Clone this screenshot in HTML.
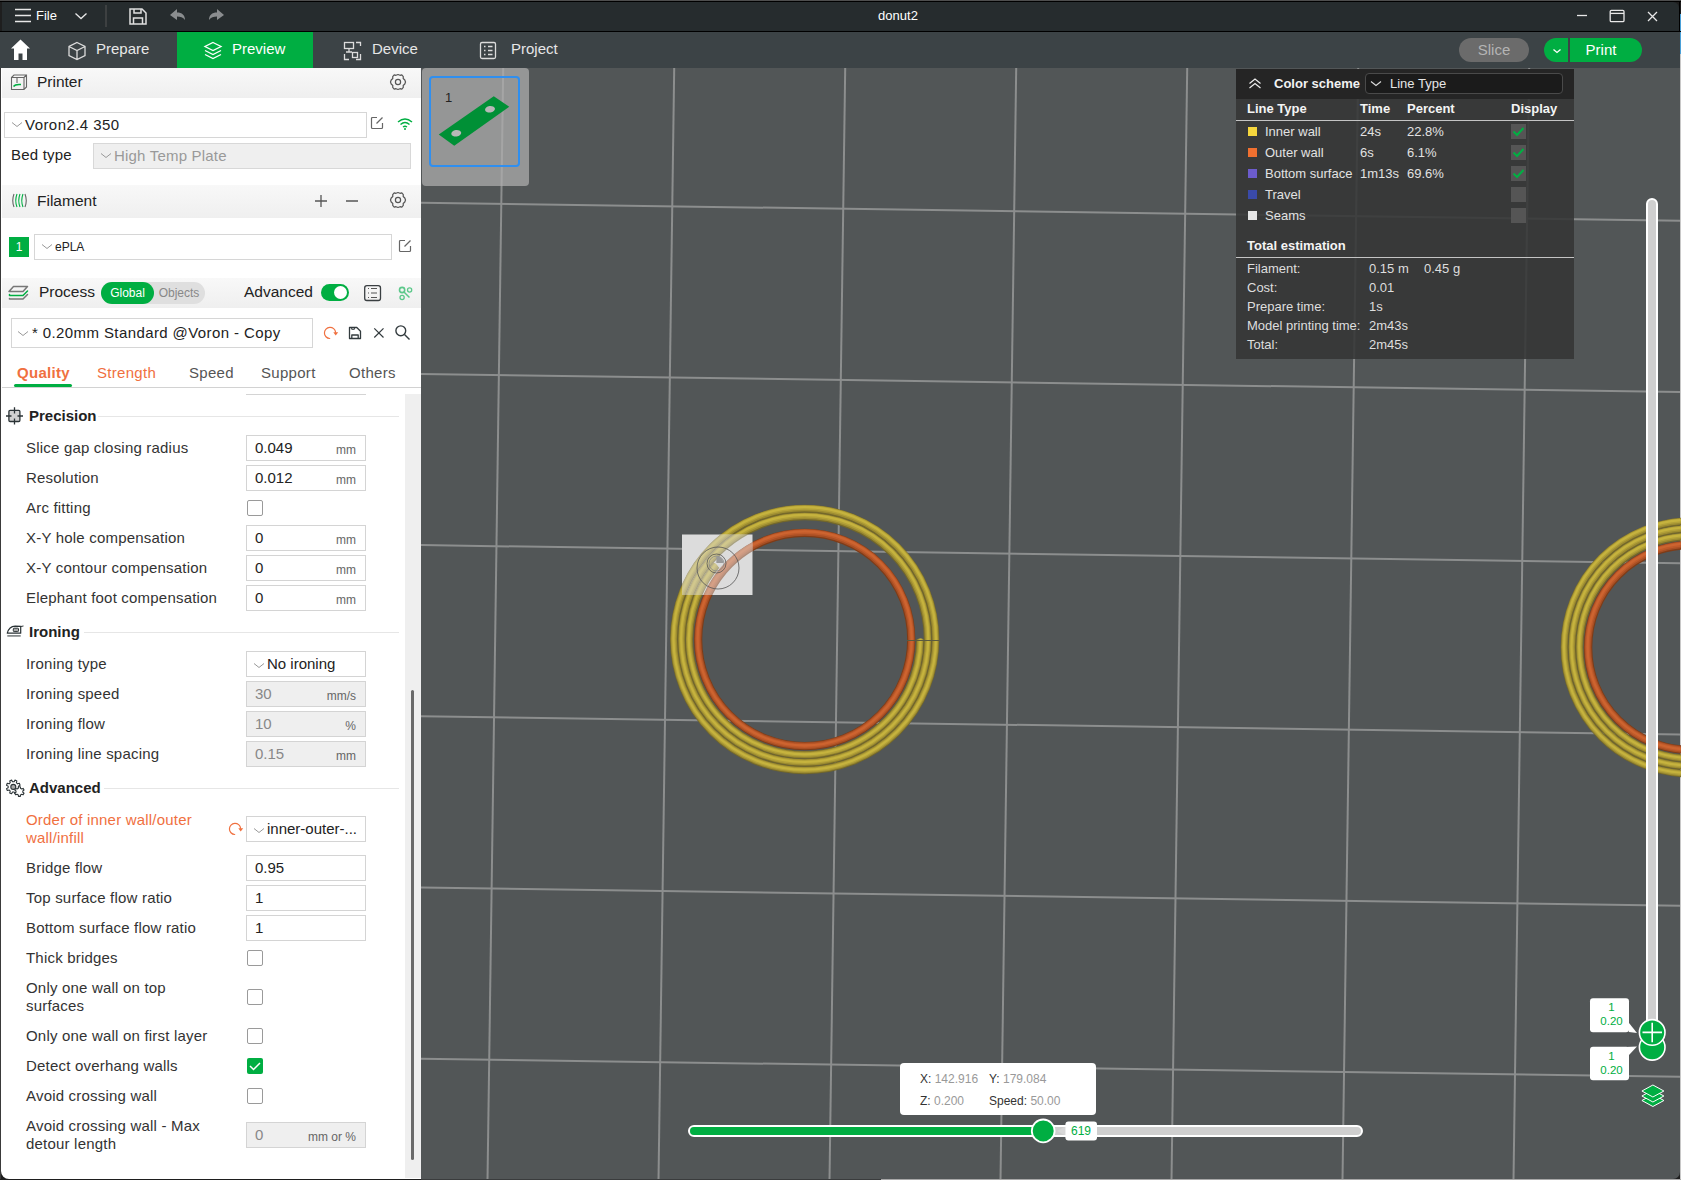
<!DOCTYPE html>
<html><head><meta charset="utf-8">
<style>
*{box-sizing:border-box;margin:0;padding:0}
html,body{width:1681px;height:1180px;overflow:hidden;background:#1e1e1e;font-family:"Liberation Sans",sans-serif;}
.a{position:absolute}
.tt{color:#e6e6e6;font-size:15px;line-height:16px;white-space:nowrap}
.hdr{left:2px;width:419px;background:linear-gradient(#f8f8f8,#efefef)}
.ht{color:#222;font-size:15.5px;line-height:16px;white-space:nowrap}
.box{border:1px solid #d6d6d6;background:#fff}
.lbl{left:26px;color:#333;font-size:15px;line-height:18px;white-space:nowrap;letter-spacing:0.2px}
.inp{left:246px;width:120px;height:26px;border:1px solid #d4d4d4;background:#fff}
.inp.dis{background:#efefef}
.val{position:absolute;left:8px;top:4px;font-size:15px;line-height:16px;color:#222}
.dis .val{color:#888}
.unit{position:absolute;right:9px;top:8px;font-size:12px;line-height:12px;color:#666}
.cb{left:247px;width:16px;height:16px;border:1px solid #9a9a9a;border-radius:2px;background:#fff}
.sec{left:29px;color:#222;font-size:15px;font-weight:bold;line-height:16px;white-space:nowrap}
.secl{height:1px;background:#e6e6e6}
</style></head><body>
<div class="a" style="left:0;top:0;width:1681px;height:1px;background:#4e4e4e"></div>
<div class="a" style="left:0;top:1px;width:1681px;height:1px;background:#000"></div>
<div class="a" style="left:2px;top:2px;width:1677px;height:29px;background:#262c2e;border-radius:0 6px 0 0"></div>
<div class="a" style="left:1679px;top:2px;width:1px;height:30px;background:#000"></div>
<div class="a" style="left:1680px;top:14px;width:1px;height:40px;background:#4aa0d8"></div>
<div class="a" style="left:1680px;top:54px;width:1px;height:1126px;background:#c8c8c8"></div>
<div class="a" style="left:0;top:31px;width:1681px;height:1px;background:#000"></div>
<svg class="a" style="left:0;top:0" width="240" height="31">
  <g stroke="#e8e8e8" stroke-width="1.6" fill="none">
   <path d="M15 9.5H31M15 15.5H31M15 21.5H31"/>
   <path d="M75.5 13.5L81 18.5L86.5 13.5" stroke-width="1.3"/>
  </g>
  <rect x="105.5" y="5" width="1" height="22" fill="#555"/>
  <g stroke="#e0e0e0" stroke-width="1.5" fill="none">
   <path d="M130 9H142L146 13V24H130Z"/>
   <path d="M134 9V13H141V9M133.5 24V18H142.5V24"/>
  </g>
  <path d="M170 15L177 9V12.5C182 12.5 185 15 185 20C183 17 180.5 16.5 177 16.5V20Z" fill="#8a8d8f"/>
  <path d="M224 15L217 9V12.5C212 12.5 209 15 209 20C211 17 213.5 16.5 217 16.5V20Z" fill="#8a8d8f"/>
 </svg>
<div class="a" style="left:36px;top:9px;color:#fff;font-size:13px;line-height:14px">File</div>
<div class="a" style="left:0;top:9px;width:1796px;text-align:center;color:#fff;font-size:13px;line-height:14px">donut2</div>
<svg class="a" style="left:1560px;top:0" width="121" height="31">
  <g stroke="#e8e8e8" stroke-width="1.3" fill="none">
   <path d="M17 15.5H27"/>
   <rect x="50.2" y="10.3" width="13.8" height="11.4" rx="1.2"/>
   <path d="M50.2 13.4H64"/>
   <path d="M88 12L97 21M97 12L88 21"/>
  </g>
 </svg>
<div class="a" style="left:0;top:32px;width:1680px;height:36px;background:#3c4346"></div>
<div class="a" style="left:177px;top:32px;width:136px;height:36px;background:#00ae42"></div>
<svg class="a" style="left:0;top:32px" width="600" height="36">
  <path d="M20.5 7.5L11 16.5H14V28H18.5V21.5H22.5V28H27V16.5H30Z" fill="#fff"/>
  <g stroke="#dcdcdc" stroke-width="1.3" fill="none">
   <path d="M77 10.5L85 14.5V23.5L77 27.5L69 23.5V14.5Z M69 14.5L77 18.5L85 14.5M77 18.5V27.5"/>
  </g>
  <g stroke="#fff" stroke-width="1.3" fill="none">
   <path d="M213 10.5L221 14.5L213 18.5L205 14.5Z"/>
   <path d="M205 18.5L213 22.5L221 18.5"/>
   <path d="M205 22.5L213 26.5L221 22.5"/>
  </g>
  <g stroke="#dcdcdc" stroke-width="1.3" fill="none">
   <rect x="344.5" y="10.5" width="9" height="6"/>
   <path d="M349 16.5V20M346 20H352"/>
   <path d="M356 10.5H360.5V14M344.5 22V27.5H349M356 27.5H360.5V22"/>
   <rect x="352.5" y="20.5" width="5" height="5"/>
   <rect x="480.5" y="10.5" width="15" height="16" rx="1.5"/>
   <path d="M484 14.5H485.5M488 14.5H492.5M484 18.5H485.5M488 18.5H492.5M484 22.5H485.5M488 22.5H492.5"/>
  </g>
 </svg>
<div class="a tt" style="left:96px;top:41px;color:#e8e8e8">Prepare</div>
<div class="a tt" style="left:232px;top:41px;color:#fff">Preview</div>
<div class="a tt" style="left:372px;top:41px;color:#e6e6e6">Device</div>
<div class="a tt" style="left:511px;top:41px;color:#e6e6e6">Project</div>
<div class="a" style="left:1459px;top:38px;width:70px;height:24px;border-radius:12px;background:#6b6b6b;color:#b4b4b4;font-size:15px;line-height:24px;text-align:center">Slice</div>
<div class="a" style="left:1544px;top:38px;width:98px;height:24px;border-radius:12px;background:#00ae42"></div>
<div class="a" style="left:1568px;top:38px;width:2px;height:24px;background:#3c4346"></div>
<svg class="a" style="left:1550px;top:46px" width="14" height="10"><path d="M3.5 3.5L7 6.5L10.5 3.5" stroke="#fff" stroke-width="1.3" fill="none"/></svg>
<div class="a" style="left:1565px;top:38px;width:72px;height:24px;color:#fff;font-size:15px;line-height:24px;text-align:center">Print</div>
<div class="a" style="left:0;top:68px;width:1px;height:1112px;background:#3a3a3a"></div>
<div class="a" style="left:1px;top:68px;width:420px;height:1111px;background:#fff;border-radius:0 0 0 8px"></div>
<div class="a" style="left:0;top:1179px;width:421px;height:1px;background:#1e1e1e"></div>
<div class="a hdr" style="top:68px;height:30px"></div>
<svg class="a" style="left:10px;top:74px" width="18" height="17" viewBox="0 0 18 17"><path d="M1.5 3.5L4 1H16.5V13L14 15.5H1.5Z M1.5 3.5H14V15.5 M14 3.5L16.5 1" fill="none" stroke="#666" stroke-width="1.1"/><path d="M7 4V9" stroke="#666" stroke-width="1.1"/><path d="M3.5 12.5Q5 10 11 10.5" stroke="#00ae42" stroke-width="1.5" fill="none"/></svg>
<div class="a ht" style="left:37px;top:74px">Printer</div>
<svg class="a" style="left:389px;top:73px" width="18" height="18" viewBox="0 0 18 18"><path d="M9 1.5L11 2.3L12.8 1.9L14.3 3.7L14.2 5.5L15.8 7L16.5 9L15.8 11L14.2 12.5L14.3 14.3L12.8 16.1L11 15.7L9 16.5L7 15.7L5.2 16.1L3.7 14.3L3.8 12.5L2.2 11L1.5 9L2.2 7L3.8 5.5L3.7 3.7L5.2 1.9L7 2.3Z" fill="none" stroke="#555" stroke-width="1.2" stroke-linejoin="round"/><circle cx="9" cy="9" r="2.6" fill="none" stroke="#555" stroke-width="1.2"/></svg>
<div class="a box" style="left:4px;top:112px;width:363px;height:26px"></div>
<svg class="a" style="left:11px;top:121px" width="12" height="8" viewBox="0 0 12 8"><path d="M1 1.5L6 5.5L11 1.5" fill="none" stroke="#999" stroke-width="1"/></svg>
<div class="a" style="left:25px;top:117px;font-size:15px;line-height:16px;color:#222;letter-spacing:0.45px">Voron2.4 350</div>
<svg class="a" style="left:369px;top:115px" width="16" height="16" viewBox="0 0 16 16"><path d="M8 2.5H3.5Q2.5 2.5 2.5 3.5V12.5Q2.5 13.5 3.5 13.5H12.5Q13.5 13.5 13.5 12.5V8" fill="none" stroke="#666" stroke-width="1.2"/><path d="M7.5 8.5L13.5 2.5" stroke="#666" stroke-width="1.2"/></svg>
<svg class="a" style="left:396px;top:116px" width="18" height="16" viewBox="0 0 18 16"><path d="M2 6Q9 0 16 6M4.5 8.5Q9 4.5 13.5 8.5M7 11Q9 9.5 11 11" fill="none" stroke="#00ae42" stroke-width="1.4"/><circle cx="9" cy="13" r="1" fill="#00ae42"/></svg>
<div class="a" style="left:11px;top:147px;font-size:15px;line-height:16px;color:#222;letter-spacing:0.2px">Bed type</div>
<div class="a" style="left:93px;top:143px;width:318px;height:26px;border:1px solid #d8d8d8;background:#efefef"></div>
<svg class="a" style="left:100px;top:152px" width="12" height="8" viewBox="0 0 12 8"><path d="M1 1.5L6 5.5L11 1.5" fill="none" stroke="#999" stroke-width="1"/></svg>
<div class="a" style="left:114px;top:148px;font-size:15px;line-height:16px;color:#999;letter-spacing:0.2px">High Temp Plate</div>
<div class="a hdr" style="top:185px;height:33px"></div>
<svg class="a" style="left:11px;top:193px" width="17" height="15" viewBox="0 0 17 15"><path d="M3 1Q0.5 7.5 3 14M14 1Q16.5 7.5 14 14" fill="none" stroke="#666" stroke-width="1.1"/><path d="M6 1Q3.5 7.5 6 14M9 1Q6.5 7.5 9 14M12 1Q9.5 7.5 12 14" fill="none" stroke="#00ae42" stroke-width="1.1"/></svg>
<div class="a ht" style="left:37px;top:193px">Filament</div>
<svg class="a" style="left:313px;top:194px" width="50" height="14"><path d="M2 7H14M8 1V13M33 7H45" stroke="#555" stroke-width="1.3"/></svg>
<svg class="a" style="left:389px;top:191px" width="18" height="18" viewBox="0 0 18 18"><path d="M9 1.5L11 2.3L12.8 1.9L14.3 3.7L14.2 5.5L15.8 7L16.5 9L15.8 11L14.2 12.5L14.3 14.3L12.8 16.1L11 15.7L9 16.5L7 15.7L5.2 16.1L3.7 14.3L3.8 12.5L2.2 11L1.5 9L2.2 7L3.8 5.5L3.7 3.7L5.2 1.9L7 2.3Z" fill="none" stroke="#555" stroke-width="1.2" stroke-linejoin="round"/><circle cx="9" cy="9" r="2.6" fill="none" stroke="#555" stroke-width="1.2"/></svg>
<div class="a" style="left:9px;top:237px;width:20px;height:20px;background:#00ae42;color:#fff;font-size:12px;line-height:20px;text-align:center">1</div>
<div class="a box" style="left:34px;top:234px;width:358px;height:26px"></div>
<svg class="a" style="left:41px;top:243px" width="12" height="8" viewBox="0 0 12 8"><path d="M1 1.5L6 5.5L11 1.5" fill="none" stroke="#999" stroke-width="1"/></svg>
<div class="a" style="left:55px;top:240px;font-size:12px;line-height:14px;color:#222">ePLA</div>
<svg class="a" style="left:397px;top:238px" width="16" height="16" viewBox="0 0 16 16"><path d="M8 2.5H3.5Q2.5 2.5 2.5 3.5V12.5Q2.5 13.5 3.5 13.5H12.5Q13.5 13.5 13.5 12.5V8" fill="none" stroke="#666" stroke-width="1.2"/><path d="M7.5 8.5L13.5 2.5" stroke="#666" stroke-width="1.2"/></svg>
<div class="a hdr" style="top:278px;height:30px"></div>
<svg class="a" style="left:0;top:278px" width="40" height="30"><g fill="none" stroke-width="1.5" stroke-linejoin="round" stroke-linecap="round"><path d="M13.5 8.5H27.5L23 13.5H9Z" stroke="#777"/><path d="M9.5 16.5V17.5H23L27.5 13" stroke="#00ae42"/><path d="M9.5 20.5V21H23L27.5 16.5" stroke="#777"/></g></svg>
<div class="a ht" style="left:39px;top:284px">Process</div>
<div class="a" style="left:101px;top:282px;width:104px;height:22px;border-radius:11px;background:#dfdfdf"></div>
<div class="a" style="left:101px;top:282px;width:53px;height:22px;border-radius:11px;background:#00ae42;color:#fff;font-size:12px;line-height:22px;text-align:center">Global</div>
<div class="a" style="left:155px;top:282px;width:48px;height:22px;color:#888;font-size:12px;line-height:22px;text-align:center">Objects</div>
<div class="a ht" style="left:244px;top:284px">Advanced</div>
<div class="a" style="left:321px;top:284px;width:28px;height:17px;border-radius:9px;background:#00ae42"></div>
<div class="a" style="left:334px;top:286px;width:13px;height:13px;border-radius:7px;background:#fff"></div>
<svg class="a" style="left:356px;top:278px" width="65" height="30"><rect x="8.7" y="7.7" width="15.8" height="14.8" rx="2.2" fill="none" stroke="#3a3f42" stroke-width="1.3"/><path d="M12 10.5H13M15 10.5H21M12 15H13M15 15H21M12 19.5H13M15 19.5H21" stroke="#555" stroke-width="1.2"/><g fill="none" stroke="#5cc88a"><circle cx="46.1" cy="12" r="2.6" stroke-width="1.6"/><circle cx="53.6" cy="12" r="2.1" stroke-width="1.3"/><circle cx="46.1" cy="19.5" r="2.1" stroke-width="1.3"/><path d="M48 14L53.5 19.5" stroke-width="1.5"/></g></svg>
<div class="a box" style="left:11px;top:318px;width:302px;height:30px"></div>
<svg class="a" style="left:17px;top:330px" width="12" height="8" viewBox="0 0 12 8"><path d="M1 1.5L6 5.5L11 1.5" fill="none" stroke="#999" stroke-width="1"/></svg>
<div class="a" style="left:32px;top:325px;font-size:15px;line-height:16px;color:#222;letter-spacing:0.4px">* 0.20mm Standard @Voron - Copy</div>
<svg class="a" style="left:316px;top:318px" width="100" height="30"><path d="M13.7 20.5A5.6 5.6 0 1 1 19.6 14.3" fill="none" stroke="#f0703f" stroke-width="1.2" stroke-linecap="round"/><path d="M17.3 14.3H22.2L19.7 17.6Z" fill="#f0703f"/><g fill="none" stroke="#333b3e" stroke-width="1.3" stroke-linejoin="round"><path d="M33.5 9.5H40.8L44.5 13.2V20.5H33.5Z"/><path d="M35.8 20.5V17H42.2V20.5"/><path d="M35.7 9.5V11.3H38.4V9.5" stroke-width="1"/><path d="M58.3 10.3L67.5 19.5M67.5 10.3L58.3 19.5" stroke-width="1.2"/><circle cx="84.8" cy="12.8" r="4.9" stroke-width="1.4"/><path d="M88.5 16.5L93.5 21.5" stroke-width="1.4"/></g></svg>
<div class="a" style="left:17px;top:365px;font-size:15px;line-height:16px;color:#f0703f;font-weight:bold;letter-spacing:0.3px">Quality</div>
<div class="a" style="left:97px;top:365px;font-size:15px;line-height:16px;color:#f0703f;font-weight:normal;letter-spacing:0.3px">Strength</div>
<div class="a" style="left:189px;top:365px;font-size:15px;line-height:16px;color:#555;font-weight:normal;letter-spacing:0.3px">Speed</div>
<div class="a" style="left:261px;top:365px;font-size:15px;line-height:16px;color:#555;font-weight:normal;letter-spacing:0.3px">Support</div>
<div class="a" style="left:349px;top:365px;font-size:15px;line-height:16px;color:#555;font-weight:normal;letter-spacing:0.3px">Others</div>
<div class="a" style="left:14px;top:384px;width:58px;height:3px;border-radius:2px;background:#00ae42"></div>
<div class="a" style="left:2px;top:387px;width:419px;height:1px;background:#d2d2d2"></div>
<div class="a" style="left:246px;top:394px;width:120px;height:1px;background:#d4d4d4"></div>
<div class="a" style="left:405px;top:394px;width:16px;height:784px;background:#efefef"></div>
<div class="a" style="left:411px;top:690px;width:3px;height:470px;border-radius:2px;background:#6a6a6a"></div>
<svg class="a" style="left:0;top:400px" width="30" height="30"><rect x="8.9" y="10.3" width="11" height="11.2" rx="1.2" fill="#d0d0d0" stroke="#2b3336" stroke-width="1.3"/><path d="M14.5 7.3V13.5M14.5 18.5V24.5M6 16H11.5M17.5 16H23" stroke="#2b3336" stroke-width="1.3"/></svg>
<div class="a sec" style="top:408px">Precision</div>
<div class="a secl" style="left:98px;top:416px;width:301px"></div>
<div class="a lbl" style="top:439px;color:#333">Slice gap closing radius</div>
<div class="a inp" style="top:435px"><div class="val">0.049</div><div class="unit">mm</div></div>
<div class="a lbl" style="top:469px;color:#333">Resolution</div>
<div class="a inp" style="top:465px"><div class="val">0.012</div><div class="unit">mm</div></div>
<div class="a lbl" style="top:499px;color:#333">Arc fitting</div>
<div class="a cb" style="top:500px"></div>
<div class="a lbl" style="top:529px;color:#333">X-Y hole compensation</div>
<div class="a inp" style="top:525px"><div class="val">0</div><div class="unit">mm</div></div>
<div class="a lbl" style="top:559px;color:#333">X-Y contour compensation</div>
<div class="a inp" style="top:555px"><div class="val">0</div><div class="unit">mm</div></div>
<div class="a lbl" style="top:589px;color:#333">Elephant foot compensation</div>
<div class="a inp" style="top:585px"><div class="val">0</div><div class="unit">mm</div></div>
<svg class="a" style="left:0;top:616px" width="30" height="26"><path d="M7.3 17.2Q9 10.5 15.2 10.2L20.7 10.3V17.2Z" fill="none" stroke="#2b3336" stroke-width="1.2" stroke-linejoin="round"/><path d="M20.7 10.5L23.5 10" stroke="#2b3336" stroke-width="1"/><rect x="13.3" y="12.2" width="5.2" height="3.4" rx="0.8" fill="#aaa" stroke="#2b3336" stroke-width="1"/><path d="M7.3 19.9H20.7" stroke="#7a7f80" stroke-width="1.6"/></svg>
<div class="a sec" style="top:624px">Ironing</div>
<div class="a secl" style="left:84px;top:632px;width:315px"></div>
<div class="a lbl" style="top:655px;color:#333">Ironing type</div>
<div class="a inp" style="top:651px"><svg style="position:absolute;left:6px;top:10px" width="12" height="8" viewBox="0 0 12 8"><path d="M1 1.5L6 5.5L11 1.5" fill="none" stroke="#999" stroke-width="1"/></svg><div class="val" style="left:20px">No ironing</div></div>
<div class="a lbl" style="top:685px;color:#333">Ironing speed</div>
<div class="a inp dis" style="top:681px"><div class="val">30</div><div class="unit">mm/s</div></div>
<div class="a lbl" style="top:715px;color:#333">Ironing flow</div>
<div class="a inp dis" style="top:711px"><div class="val">10</div><div class="unit">%</div></div>
<div class="a lbl" style="top:745px;color:#333">Ironing line spacing</div>
<div class="a inp dis" style="top:741px"><div class="val">0.15</div><div class="unit">mm</div></div>
<svg class="a" style="left:0;top:770px" width="30" height="30"><path d="M18.44 17.69L20.09 18.61L19.31 20.49L17.49 19.97L16.37 21.09L16.89 22.91L15.01 23.69L14.09 22.04L12.51 22.04L11.59 23.69L9.71 22.91L10.23 21.09L9.11 19.97L7.29 20.49L6.51 18.61L8.16 17.69L8.16 16.11L6.51 15.19L7.29 13.31L9.11 13.83L10.23 12.71L9.71 10.89L11.59 10.11L12.51 11.76L14.09 11.76L15.01 10.11L16.89 10.89L16.37 12.71L17.49 13.83L19.31 13.31L20.09 15.19L18.44 16.11Z" fill="#fff" stroke="#2b3336" stroke-width="1.1" stroke-linejoin="round"/><circle cx="13.3" cy="16.9" r="2.5" fill="#aaa" stroke="#2b3336" stroke-width="1.1"/><path d="M18.30 18.28L18.46 16.79L20.34 16.79L20.50 18.28L21.73 18.99L23.09 18.38L24.04 20.01L22.83 20.89L22.83 22.31L24.04 23.19L23.09 24.82L21.73 24.21L20.50 24.92L20.34 26.41L18.46 26.41L18.30 24.92L17.07 24.21L15.71 24.82L14.76 23.19L15.97 22.31L15.97 20.89L14.76 20.01L15.71 18.38L17.07 18.99Z" fill="#fff" stroke="#2b3336" stroke-width="1.1" stroke-linejoin="round"/></svg>
<div class="a sec" style="top:780px">Advanced</div>
<div class="a secl" style="left:104px;top:788px;width:295px"></div>
<div class="a lbl" style="top:811px;color:#f0703f">Order of inner wall/outer<br>wall/infill</div>
<svg class="a" style="left:221px;top:814px" width="30" height="30"><path d="M13.7 20.5A5.6 5.6 0 1 1 19.6 14.3" fill="none" stroke="#f0703f" stroke-width="1.2" stroke-linecap="round"/><path d="M17.3 14.3H22.2L19.7 17.6Z" fill="#f0703f"/></svg>
<div class="a inp" style="top:816px"><svg style="position:absolute;left:6px;top:10px" width="12" height="8" viewBox="0 0 12 8"><path d="M1 1.5L6 5.5L11 1.5" fill="none" stroke="#999" stroke-width="1"/></svg><div class="val" style="left:20px">inner-outer-...</div></div>
<div class="a lbl" style="top:859px;color:#333">Bridge flow</div>
<div class="a inp" style="top:855px"><div class="val">0.95</div></div>
<div class="a lbl" style="top:889px;color:#333">Top surface flow ratio</div>
<div class="a inp" style="top:885px"><div class="val">1</div></div>
<div class="a lbl" style="top:919px;color:#333">Bottom surface flow ratio</div>
<div class="a inp" style="top:915px"><div class="val">1</div></div>
<div class="a lbl" style="top:949px;color:#333">Thick bridges</div>
<div class="a cb" style="top:950px"></div>
<div class="a lbl" style="top:979px;color:#333">Only one wall on top<br>surfaces</div>
<div class="a cb" style="top:989px"></div>
<div class="a lbl" style="top:1027px;color:#333">Only one wall on first layer</div>
<div class="a cb" style="top:1028px"></div>
<div class="a lbl" style="top:1057px;color:#333">Detect overhang walls</div>
<div class="a" style="left:247px;top:1058px;width:16px;height:16px;border-radius:2px;background:#00ae42"><svg style="position:absolute;left:0;top:0" width="16" height="16"><path d="M3 8L6.5 11.5L13 5" fill="none" stroke="#fff" stroke-width="1.5"/></svg></div>
<div class="a lbl" style="top:1087px;color:#333">Avoid crossing wall</div>
<div class="a cb" style="top:1088px"></div>
<div class="a lbl" style="top:1117px;color:#333">Avoid crossing wall - Max<br>detour length</div>
<div class="a inp dis" style="top:1122px"><div class="val">0</div><div class="unit">mm or %</div></div>
<div class="a" style="left:421px;top:68px;width:1259px;height:1111px;background:#525657;border-radius:0 0 7px 0;overflow:hidden">
<svg class="a" style="left:0;top:0" width="1260" height="1112"><g stroke="#8c8e8e" stroke-width="2"><line x1="-88.79" y1="0" x2="-104.49" y2="1112"/><line x1="82.21" y1="0" x2="66.51" y2="1112"/><line x1="253.21" y1="0" x2="237.51" y2="1112"/><line x1="424.21" y1="0" x2="408.51" y2="1112"/><line x1="595.21" y1="0" x2="579.51" y2="1112"/><line x1="766.21" y1="0" x2="750.51" y2="1112"/><line x1="937.21" y1="0" x2="921.51" y2="1112"/><line x1="1108.21" y1="0" x2="1092.51" y2="1112"/><line x1="1279.21" y1="0" x2="1263.51" y2="1112"/><line x1="0" y1="-36.50" x2="1260" y2="-18.36"/><line x1="0" y1="134.70" x2="1260" y2="152.84"/><line x1="0" y1="305.90" x2="1260" y2="324.04"/><line x1="0" y1="477.10" x2="1260" y2="495.24"/><line x1="0" y1="648.30" x2="1260" y2="666.44"/><line x1="0" y1="819.50" x2="1260" y2="837.64"/><line x1="0" y1="990.70" x2="1260" y2="1008.84"/><line x1="0" y1="1161.90" x2="1260" y2="1180.04"/></g></svg>
</div>
<div class="a" style="left:421px;top:1179px;width:460px;height:1px;background:#3a3c3d"></div>
<div class="a" style="left:881px;top:1179px;width:800px;height:1px;background:#a8a8a8"></div>
<div class="a" style="left:422px;top:68px;width:107px;height:118px;background:rgba(175,175,175,0.72);border-radius:4px"></div>
<div class="a" style="left:429px;top:76px;width:91px;height:91px;border:2px solid #2f8ff0;border-radius:4px"></div>
<div class="a" style="left:445px;top:91px;font-size:13px;line-height:14px;color:#222">1</div>
<svg class="a" style="left:421px;top:68px" width="108" height="118"><path d="M17.75 66.5L72.75 28.25L88.25 38.75L33.25 77.75Z" fill="#009036"/><ellipse cx="35.25" cy="65.25" rx="5" ry="3.3" fill="#b8b8b8" transform="rotate(-8 35.25 65.25)"/><ellipse cx="69" cy="41.25" rx="5" ry="3.3" fill="#b8b8b8" transform="rotate(-8 69 41.25)"/></svg>
<svg class="a" style="left:0;top:0" width="1681" height="1180"><defs><clipPath id="sq"><rect x="682" y="534.5" width="70.5" height="60.5"/></clipPath></defs><g fill="none"><circle cx="804.7" cy="639.50" r="130.75" stroke="#74682a" stroke-width="7.80"/><circle cx="804.7" cy="639.15" r="130.95" stroke="#9c8b31" stroke-width="6.24"/><circle cx="804.7" cy="638.80" r="131.15" stroke="#b3a138" stroke-width="4.29"/><circle cx="804.7" cy="638.45" r="131.25" stroke="#c6b33e" stroke-width="2.18"/><circle cx="804.7" cy="639.50" r="123.05" stroke="#74682a" stroke-width="7.80"/><circle cx="804.7" cy="639.15" r="123.25" stroke="#9c8b31" stroke-width="6.24"/><circle cx="804.7" cy="638.80" r="123.45" stroke="#b3a138" stroke-width="4.29"/><circle cx="804.7" cy="638.45" r="123.55" stroke="#c6b33e" stroke-width="2.18"/><path d="M920.05 639.50A115.35 115.35 0 1 1 716.34 565.35" stroke="#74682a" stroke-width="7.80"/><path d="M920.25 639.15A115.55 115.55 0 1 1 716.18 564.88" stroke="#9c8b31" stroke-width="6.24"/><path d="M920.45 638.80A115.75 115.75 0 1 1 716.03 564.40" stroke="#b3a138" stroke-width="4.29"/><path d="M920.55 638.45A115.85 115.85 0 1 1 715.95 563.98" stroke="#c6b33e" stroke-width="2.18"/><circle cx="804.7" cy="639.50" r="106.55" stroke="#7e3c18" stroke-width="8.20"/><circle cx="804.7" cy="639.15" r="106.75" stroke="#a84f24" stroke-width="6.56"/><circle cx="804.7" cy="638.80" r="106.95" stroke="#bf5a2a" stroke-width="4.51"/><circle cx="804.7" cy="638.45" r="107.05" stroke="#cd6430" stroke-width="2.30"/><path d="M907 640.5H939" stroke="#5a5a40" stroke-width="1"/><circle cx="1690.6" cy="647.50" r="126.20" stroke="#74682a" stroke-width="7.60"/><circle cx="1690.6" cy="647.15" r="126.40" stroke="#9c8b31" stroke-width="6.08"/><circle cx="1690.6" cy="646.80" r="126.60" stroke="#b3a138" stroke-width="4.18"/><circle cx="1690.6" cy="646.45" r="126.70" stroke="#c6b33e" stroke-width="2.13"/><circle cx="1690.6" cy="647.50" r="118.60" stroke="#74682a" stroke-width="7.60"/><circle cx="1690.6" cy="647.15" r="118.80" stroke="#9c8b31" stroke-width="6.08"/><circle cx="1690.6" cy="646.80" r="119.00" stroke="#b3a138" stroke-width="4.18"/><circle cx="1690.6" cy="646.45" r="119.10" stroke="#c6b33e" stroke-width="2.13"/><circle cx="1690.6" cy="647.50" r="111.00" stroke="#74682a" stroke-width="7.60"/><circle cx="1690.6" cy="647.15" r="111.20" stroke="#9c8b31" stroke-width="6.08"/><circle cx="1690.6" cy="646.80" r="111.40" stroke="#b3a138" stroke-width="4.18"/><circle cx="1690.6" cy="646.45" r="111.50" stroke="#c6b33e" stroke-width="2.13"/><circle cx="1690.6" cy="647.50" r="102.50" stroke="#7e3c18" stroke-width="8.40"/><circle cx="1690.6" cy="647.15" r="102.70" stroke="#a84f24" stroke-width="6.72"/><circle cx="1690.6" cy="646.80" r="102.90" stroke="#bf5a2a" stroke-width="4.62"/><circle cx="1690.6" cy="646.45" r="103.00" stroke="#cd6430" stroke-width="2.35"/></g><rect x="682" y="534.5" width="70.5" height="60.5" fill="#dcdcdc"/><g fill="none" clip-path="url(#sq)" opacity="0.5"><circle cx="804.7" cy="639.50" r="130.75" stroke="#74682a" stroke-width="7.80"/><circle cx="804.7" cy="639.15" r="130.95" stroke="#9c8b31" stroke-width="6.24"/><circle cx="804.7" cy="638.80" r="131.15" stroke="#b3a138" stroke-width="4.29"/><circle cx="804.7" cy="638.45" r="131.25" stroke="#c6b33e" stroke-width="2.18"/><circle cx="804.7" cy="639.50" r="123.05" stroke="#74682a" stroke-width="7.80"/><circle cx="804.7" cy="639.15" r="123.25" stroke="#9c8b31" stroke-width="6.24"/><circle cx="804.7" cy="638.80" r="123.45" stroke="#b3a138" stroke-width="4.29"/><circle cx="804.7" cy="638.45" r="123.55" stroke="#c6b33e" stroke-width="2.18"/><path d="M920.05 639.50A115.35 115.35 0 1 1 716.34 565.35" stroke="#74682a" stroke-width="7.80"/><path d="M920.25 639.15A115.55 115.55 0 1 1 716.18 564.88" stroke="#9c8b31" stroke-width="6.24"/><path d="M920.45 638.80A115.75 115.75 0 1 1 716.03 564.40" stroke="#b3a138" stroke-width="4.29"/><path d="M920.55 638.45A115.85 115.85 0 1 1 715.95 563.98" stroke="#c6b33e" stroke-width="2.18"/><circle cx="804.7" cy="639.50" r="106.55" stroke="#7e3c18" stroke-width="8.20"/><circle cx="804.7" cy="639.15" r="106.75" stroke="#a84f24" stroke-width="6.56"/><circle cx="804.7" cy="638.80" r="106.95" stroke="#bf5a2a" stroke-width="4.51"/><circle cx="804.7" cy="638.45" r="107.05" stroke="#cd6430" stroke-width="2.30"/></g><g fill="none" stroke="#555" stroke-width="0.8"><circle cx="716.5" cy="563.5" r="9.5"/><circle cx="716.5" cy="563.5" r="7.5" stroke="#888"/><circle cx="718" cy="568" r="21"/></g><path d="M716.4 563L716.4 556A7 7 0 0 1 723.4 563Z" fill="#9a9a9a"/></svg>
<div class="a" style="left:1236px;top:69px;width:338px;height:290px;background:rgba(52,53,53,0.88)"></div>
<div class="a" style="left:1236px;top:69px;width:338px;height:30px;background:rgba(36,36,36,0.95)"></div>
<div class="a" style="left:1236px;top:120px;width:338px;height:1px;background:#c4c4c4"></div>
<svg class="a" style="left:1248px;top:77px" width="14" height="13"><path d="M1.5 6.5L7 2L12.5 6.5M1.5 11L7 6.5L12.5 11" fill="none" stroke="#eee" stroke-width="1.2"/></svg>
<div class="a" style="left:1274px;top:77px;font-size:13px;line-height:14px;font-weight:bold;color:#f2f2f2">Color scheme</div>
<div class="a" style="left:1365px;top:73px;width:198px;height:21px;background:#1b1b1b;border:1px solid #4a4a4a;border-radius:4px"></div>
<svg class="a" style="left:1370px;top:80px" width="12" height="8"><path d="M1 1.5L6 5.5L11 1.5" fill="none" stroke="#ddd" stroke-width="1.1"/></svg>
<div class="a" style="left:1390px;top:77px;font-size:13px;line-height:14px;color:#e6e6e6">Line Type</div>
<div class="a" style="left:1247px;top:102px;font-size:13px;line-height:14px;font-weight:bold;color:#f4f4f4">Line Type</div>
<div class="a" style="left:1360px;top:102px;font-size:13px;line-height:14px;font-weight:bold;color:#f4f4f4">Time</div>
<div class="a" style="left:1407px;top:102px;font-size:13px;line-height:14px;font-weight:bold;color:#f4f4f4">Percent</div>
<div class="a" style="left:1511px;top:102px;font-size:13px;line-height:14px;font-weight:bold;color:#f4f4f4">Display</div>
<div class="a" style="left:1248px;top:127px;width:9px;height:9px;background:#f5d63d"></div>
<div class="a" style="left:1265px;top:125px;font-size:13px;line-height:14px;color:#e2e2e2;white-space:nowrap">Inner wall</div>
<div class="a" style="left:1360px;top:125px;font-size:13px;line-height:14px;color:#e2e2e2">24s</div>
<div class="a" style="left:1407px;top:125px;font-size:13px;line-height:14px;color:#e2e2e2">22.8%</div>
<div class="a" style="left:1511px;top:124px;width:15px;height:15px;background:#555"></div>
<svg class="a" style="left:1511px;top:124px" width="15" height="15"><path d="M2.5 7.5L6 11L12.5 4" fill="none" stroke="#00b043" stroke-width="2"/></svg>
<div class="a" style="left:1248px;top:148px;width:9px;height:9px;background:#f07030"></div>
<div class="a" style="left:1265px;top:146px;font-size:13px;line-height:14px;color:#e2e2e2;white-space:nowrap">Outer wall</div>
<div class="a" style="left:1360px;top:146px;font-size:13px;line-height:14px;color:#e2e2e2">6s</div>
<div class="a" style="left:1407px;top:146px;font-size:13px;line-height:14px;color:#e2e2e2">6.1%</div>
<div class="a" style="left:1511px;top:145px;width:15px;height:15px;background:#555"></div>
<svg class="a" style="left:1511px;top:145px" width="15" height="15"><path d="M2.5 7.5L6 11L12.5 4" fill="none" stroke="#00b043" stroke-width="2"/></svg>
<div class="a" style="left:1248px;top:169px;width:9px;height:9px;background:#6c5ccc"></div>
<div class="a" style="left:1265px;top:167px;font-size:13px;line-height:14px;color:#e2e2e2;white-space:nowrap">Bottom surface</div>
<div class="a" style="left:1360px;top:167px;font-size:13px;line-height:14px;color:#e2e2e2">1m13s</div>
<div class="a" style="left:1407px;top:167px;font-size:13px;line-height:14px;color:#e2e2e2">69.6%</div>
<div class="a" style="left:1511px;top:166px;width:15px;height:15px;background:#555"></div>
<svg class="a" style="left:1511px;top:166px" width="15" height="15"><path d="M2.5 7.5L6 11L12.5 4" fill="none" stroke="#00b043" stroke-width="2"/></svg>
<div class="a" style="left:1248px;top:190px;width:9px;height:9px;background:#3a4aa8"></div>
<div class="a" style="left:1265px;top:188px;font-size:13px;line-height:14px;color:#e2e2e2;white-space:nowrap">Travel</div>
<div class="a" style="left:1511px;top:187px;width:15px;height:15px;background:#555"></div>
<div class="a" style="left:1248px;top:211px;width:9px;height:9px;background:#e6e6e6"></div>
<div class="a" style="left:1265px;top:209px;font-size:13px;line-height:14px;color:#e2e2e2;white-space:nowrap">Seams</div>
<div class="a" style="left:1511px;top:208px;width:15px;height:15px;background:#555"></div>
<div class="a" style="left:1247px;top:239px;font-size:13px;line-height:14px;font-weight:bold;color:#f4f4f4">Total estimation</div>
<div class="a" style="left:1236px;top:257px;width:338px;height:1px;background:#c4c4c4"></div>
<div class="a" style="left:1247px;top:262px;font-size:13px;line-height:14px;color:#dedede;white-space:nowrap">Filament:</div>
<div class="a" style="left:1369px;top:262px;font-size:13px;line-height:14px;color:#dedede">0.15 m</div>
<div class="a" style="left:1247px;top:281px;font-size:13px;line-height:14px;color:#dedede;white-space:nowrap">Cost:</div>
<div class="a" style="left:1369px;top:281px;font-size:13px;line-height:14px;color:#dedede">0.01</div>
<div class="a" style="left:1247px;top:300px;font-size:13px;line-height:14px;color:#dedede;white-space:nowrap">Prepare time:</div>
<div class="a" style="left:1369px;top:300px;font-size:13px;line-height:14px;color:#dedede">1s</div>
<div class="a" style="left:1247px;top:319px;font-size:13px;line-height:14px;color:#dedede;white-space:nowrap">Model printing time:</div>
<div class="a" style="left:1369px;top:319px;font-size:13px;line-height:14px;color:#dedede">2m43s</div>
<div class="a" style="left:1247px;top:338px;font-size:13px;line-height:14px;color:#dedede;white-space:nowrap">Total:</div>
<div class="a" style="left:1369px;top:338px;font-size:13px;line-height:14px;color:#dedede">2m45s</div>
<div class="a" style="left:1424px;top:262px;font-size:13px;line-height:14px;color:#dedede">0.45 g</div>
<div class="a" style="left:1646px;top:198px;width:12px;height:840px;border:2px solid #fff;border-radius:6px;background:#cfcfcf"></div>
<svg class="a" style="left:1580px;top:990px" width="101" height="130"><rect x="10" y="8.3" width="39" height="34" rx="3" fill="#fff"/><path d="M45 28L57 43L49 42Z" fill="#fff"/><rect x="10" y="56.7" width="39" height="33.6" rx="3" fill="#fff"/><path d="M45 57L57 56.5L49 65Z" fill="#fff"/><circle cx="72.2" cy="57.3" r="12.8" fill="#00ae42" stroke="#fff" stroke-width="1.6"/><circle cx="72.2" cy="42.4" r="12.8" fill="#00ae42" stroke="#fff" stroke-width="1.6"/><path d="M62.5 42.4H82M72.2 32.7V52.2" stroke="#fff" stroke-width="1.6"/><g fill="#00ae42" stroke="#fff" stroke-width="1"><path d="M72.9 116.5L61.9 110.5L72.9 104.5L83.9 110.5Z"/><path d="M72.9 112L61.9 106L72.9 100L83.9 106Z"/><path d="M72.9 107L61.9 101L72.9 95L83.9 101Z"/></g></svg>
<div class="a" style="left:1592px;top:1000px;width:39px;text-align:center;font-size:11.5px;line-height:14px;color:#00ae42">1<br>0.20</div>
<div class="a" style="left:1592px;top:1049px;width:39px;text-align:center;font-size:11.5px;line-height:14px;color:#00ae42">1<br>0.20</div>
<div class="a" style="left:688px;top:1125px;width:675px;height:12px;border:2px solid #fff;border-radius:6px;background:#cfcfcf"></div>
<div class="a" style="left:690px;top:1127px;width:345px;height:8px;border-radius:4px 0 0 4px;background:#00ae42"></div>
<svg class="a" style="left:1020px;top:1115px" width="90" height="32"><circle cx="23.2" cy="15.9" r="11.4" fill="#00ae42" stroke="#fff" stroke-width="1.8"/><path d="M37 16L45.5 11.5V20.5Z" fill="#d8d8d8"/><rect x="45.4" y="6.4" width="31.6" height="19" rx="3" fill="#fff"/></svg>
<div class="a" style="left:1065px;top:1124px;width:32px;text-align:center;font-size:12px;line-height:14px;color:#00ae42">619</div>
<div class="a" style="left:900px;top:1063px;width:196px;height:52px;background:#fff;border-radius:4px"></div>
<div class="a" style="left:920px;top:1072px;font-size:12px;line-height:14px;color:#333;white-space:nowrap">X: <span style="color:#999">142.916</span></div>
<div class="a" style="left:989px;top:1072px;font-size:12px;line-height:14px;color:#333;white-space:nowrap">Y: <span style="color:#999">179.084</span></div>
<div class="a" style="left:920px;top:1094px;font-size:12px;line-height:14px;color:#333;white-space:nowrap">Z: <span style="color:#999">0.200</span></div>
<div class="a" style="left:989px;top:1094px;font-size:12px;line-height:14px;color:#333;white-space:nowrap">Speed: <span style="color:#999">50.00</span></div>
</body></html>
